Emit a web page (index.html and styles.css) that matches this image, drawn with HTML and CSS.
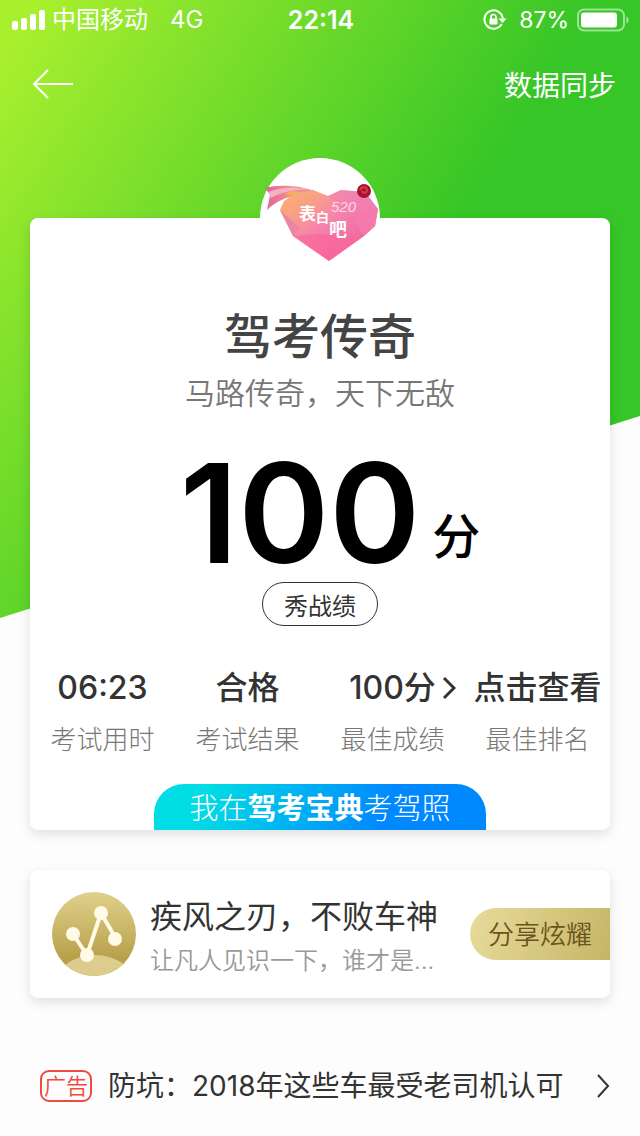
FILE: index.html
```html
<!DOCTYPE html>
<html lang="zh-CN">
<head>
<meta charset="utf-8">
<meta name="viewport" content="width=device-width, initial-scale=1">
<title>驾考宝典</title>
<link rel="stylesheet" href="styles.css">
</head>
<body>
<div class="page">
  <div class="status">
    <div class="status-side">
      <svg class="signal" width="34" height="22" viewBox="0 0 34 22" fill="#fff" aria-hidden="true">
        <rect x="0" y="12" width="6" height="9" rx="2"/><rect x="9" y="9" width="6" height="12" rx="2"/><rect x="18" y="5" width="6" height="16" rx="2"/><rect x="27" y="1" width="6" height="20" rx="2"/>
      </svg>
      <span class="carrier">中国移动</span>
      <span>4G</span>
    </div>
    <time class="clock">22:14</time>
    <div class="status-side status-right">
      <svg class="lock" width="24" height="22" viewBox="0 0 24 22" fill="none" aria-hidden="true">
        <path d="M18.700 15A9.200 9.200 0 1 1 19.800 9.500" stroke="#fff" stroke-width="2"/>
        <path d="M15.500 9.500h8l-4 4.500z" fill="#fff"/>
        <rect x="6.500" y="9.500" width="8" height="6" rx="1" fill="#fff"/>
        <path d="M8 10V8a2.500 2.500 0 0 1 5 0v2" stroke="#fff" stroke-width="1.500"/>
      </svg>
      <span class="charge">87%</span>
      <svg class="battery" width="53" height="24" viewBox="0 0 53 24" fill="none" aria-hidden="true">
        <rect x="1" y="1.500" width="46" height="21" rx="6" stroke="#fff" stroke-opacity=".5" stroke-width="2"/>
        <rect x="4" y="4.500" width="36" height="15" rx="3" fill="#fff"/>
        <path d="M49.500 8.500c2.600.8 2.600 6.200 0 7z" fill="#fff" fill-opacity=".6"/>
      </svg>
    </div>
  </div>

  <nav class="nav">
    <button class="back" type="button" aria-label="返回">
      <svg width="42" height="32" viewBox="0 0 42 32" fill="none" stroke="#fff" stroke-width="2" aria-hidden="true"><path d="M16 2 2 16l14 14M2 16h39"/></svg>
    </button>
    <a class="sync" href="#">数据同步</a>
  </nav>

  <main class="content">
    <section class="result card">
      <svg class="avatar" viewBox="0 0 120 120" role="img" aria-label="头像">
        <defs>
          <linearGradient id="heart" x1="0" y1="0" x2=".9" y2=".9">
            <stop offset="0" stop-color="#fbb36e"/><stop offset=".25" stop-color="#f9a183"/><stop offset=".5" stop-color="#f684ab"/><stop offset="1" stop-color="#ef5c9c"/>
          </linearGradient>
          <linearGradient id="ribbon" x1="0" x2="1">
            <stop offset="0" stop-color="#e0639c"/><stop offset=".5" stop-color="#ee8f8a"/><stop offset="1" stop-color="#e883a5"/>
          </linearGradient>
        </defs>
        <circle cx="60" cy="60" r="60" fill="#fff"/>
        <path d="M5 30C18 26 42 27 56 34L40 37C27 38 15 44 7 52L10 37Z" fill="url(#ribbon)"/>
        <path d="M8 34c14-5 28-6 43-2-14-1-28 1-40 8z" fill="#f4b1c4"/>
        <path d="M24 36l8-3 10 1-7 3z" fill="#f5b04f"/>
        <path d="M68 38 81 32 105 34 118 51 115 68 104 78 69 103 33 78 20 52 24 43 35 35 53 32Z" fill="url(#heart)"/>
        <path d="M68 38 81 32 105 34 118 51 91 57Z" fill="#ee80b8" opacity=".6"/>
        <path d="M118 51 115 68 104 78 91 57Z" fill="#f47aac"/>
        <path d="M20 52 40 70 33 78Z" fill="#ec85a0"/>
        <path d="M33 78 54 76 69 103Z" fill="#f8699a" opacity=".7"/>
        <path d="M54 76 104 78 69 103Z" fill="#fa6798" opacity=".7"/>
        <circle cx="104" cy="33" r="7" fill="#a8122e"/>
        <path d="M100 32c2-4 7-3 7 0s-4 4-5 1" fill="none" stroke="#dc3850" stroke-width="2"/>
        <g fill="#fff" class="avatar-text"><text x="39" y="62" font-size="17">表</text><text x="56" y="64" font-size="13">白</text><text x="69" y="78" font-size="18">吧</text></g>
        <text x="71" y="54" class="avatar-number">520</text>
      </svg>
      <h1 class="title">驾考传奇</h1>
      <p class="subtitle">马路传奇，天下无敌</p>
      <p class="score"><strong>100</strong><span>分</span></p>
      <button class="show" type="button">秀战绩</button>
      <dl class="stats">
        <div class="stat"><dt>考试用时</dt><dd>06:23</dd></div>
        <div class="stat"><dt>考试结果</dt><dd>合格</dd></div>
        <div class="stat"><dt>最佳成绩</dt><dd>100分<svg class="stat-arrow" width="14" height="24" viewBox="0 0 14 24" fill="none" stroke="#333" stroke-width="3" aria-hidden="true"><path d="M2 2l10 10L2 22"/></svg></dd></div>
        <div class="stat"><dt>最佳排名</dt><dd><a href="#">点击查看</a></dd></div>
      </dl>
      <p class="slogan">我在<b>驾考宝典</b>考驾照</p>
    </section>

    <section class="honor card">
      <svg class="medal" viewBox="0 0 84 84" aria-hidden="true">
        <defs>
          <linearGradient id="gold" x1="0" y1="0" x2="0" y2="1"><stop offset="0" stop-color="#dfd18b"/><stop offset=".8" stop-color="#b8a04a"/></linearGradient>
          <clipPath id="disc"><circle cx="42" cy="42" r="42"/></clipPath>
        </defs>
        <circle cx="42" cy="42" r="42" fill="url(#gold)"/>
        <ellipse cx="43" cy="88" rx="37" ry="25" fill="#dccd8d" clip-path="url(#disc)"/>
        <path d="M21 42 35 63 49 21 63 45" fill="none" stroke="#fffbe8" stroke-width="4"/>
        <g fill="#fffbe8"><circle cx="21" cy="42" r="7"/><circle cx="35" cy="63" r="7"/><circle cx="49" cy="21" r="7"/><circle cx="63" cy="47" r="7"/></g>
      </svg>
      <div class="honor-text">
        <h2>疾风之刃，不败车神</h2>
        <p>让凡人见识一下，谁才是...</p>
      </div>
      <button class="share" type="button">分享炫耀</button>
    </section>

    <a class="ad" href="#">
      <span class="ad-badge">广告</span>
      <span class="ad-text">防坑：2018年这些车最受老司机认可</span>
      <svg width="14" height="24" viewBox="0 0 14 24" fill="none" stroke="#333" stroke-width="2" aria-hidden="true"><path d="M2 1l10 11L2 23"/></svg>
    </a>
  </main>
</div>
</body>
</html>
```

FILE: styles.css
```css
* { box-sizing: border-box; }

body, h1, h2, p, dl, dd { margin: 0; }

body {
  background: #fdfdfd;
  color: #333;
  font-family: Inter, "Noto Sans CJK SC", sans-serif;
}

a { color: inherit; text-decoration: none; }

button {
  margin: 0;
  padding: 0;
  border: 0;
  background: none;
  color: inherit;
  font: inherit;
}

svg { display: block; flex: none; }

.page { position: relative; isolation: isolate; }

/* Slanted green backdrop */
.page::before {
  content: "";
  position: absolute;
  z-index: -1;
  inset: 0 0 auto;
  height: 618px;
  background: linear-gradient(122deg, #a8ef2e 4%, #37c627 58%);
  clip-path: polygon(0 0, 100% 0, 100% 416px, 0 100%);
}

.status {
  display: grid;
  grid-template-columns: 1fr auto 1fr;
  align-items: center;
  height: 40px;
  padding: 0 10px 0 12px;
  color: #fff;
  font-size: 24px;
  line-height: 40px;
}

.status-side { display: flex; align-items: center; }
.status-right { justify-content: flex-end; }
.signal { margin-right: 6px; }
.carrier { margin-right: 22px; }
.clock { font-size: 25px; font-weight: 600; }
.lock { margin-right: 12px; }
.charge { font-size: 23px; }
.battery { margin-left: 8px; }

.nav {
  display: flex;
  justify-content: space-between;
  align-items: center;
  height: 88px;
  padding: 0 24px 0 32px;
  color: #fff;
  font-size: 28px;
}

.content { padding: 90px 30px 0; }

.card {
  border-radius: 8px;
  background: #fff;
  box-shadow: 0 4px 12px rgba(0, 0, 0, .12);
}

.result {
  display: flex;
  flex-direction: column;
  align-items: center;
}

.avatar { width: 120px; height: 120px; margin-top: -60px; }

.avatar-text {
  font-family: "Noto Sans CJK SC", sans-serif;
  font-weight: 700;
}

.avatar-number {
  fill: #ffd5e6;
  font-family: "Liberation Sans", sans-serif;
  font-size: 15px;
  font-style: italic;
}

.title {
  margin-top: 27px;
  color: #444;
  font-size: 48px;
  font-weight: 500;
  line-height: 64px;
}

.subtitle {
  margin-top: 4px;
  color: #777;
  font-size: 30px;
  font-weight: 350;
  line-height: 40px;
}

.score {
  display: flex;
  align-items: flex-end;
  gap: 12px;
  margin: 40px 0 9px 20px;
  color: #000;
  font-weight: 500;
}

.score strong { font-size: 138px; font-weight: 600; line-height: 120px; }
.score span { margin-bottom: 4px; font-size: 48px; line-height: 64px; }

.show {
  width: 116px;
  height: 44px;
  border: 1px solid #333;
  border-radius: 22px;
  font-size: 24px;
}

.stats {
  display: grid;
  grid-template-columns: repeat(4, 1fr);
  align-self: stretch;
  margin-top: 40px;
}

.stat {
  display: flex;
  flex-direction: column-reverse;
  align-items: center;
  gap: 10px;
  white-space: nowrap;
}

.stat dt {
  color: #777;
  font-size: 26px;
  font-weight: 300;
  line-height: 40px;
}

.stat dd {
  position: relative;
  font-size: 32px;
  font-weight: 500;
  line-height: 44px;
}

.stat-arrow {
  position: absolute;
  top: 10px;
  left: calc(100% + 6px);
}

.slogan {
  margin-top: 24px;
  padding: 4px 35px 0;
  border-radius: 30px 30px 0 0;
  background: linear-gradient(110deg, #00dde4 15%, #0088ff 70%);
  color: #fff;
  font-size: 29px;
  font-weight: 300;
  line-height: 42px;
}

.slogan b { font-weight: 700; }

.honor {
  display: flex;
  align-items: center;
  height: 128px;
  margin-top: 40px;
  padding-left: 22px;
}

.medal { width: 84px; height: 84px; margin-right: 14px; }

.honor-text { flex: 1; min-width: 0; padding-top: 6px; white-space: nowrap; }

.honor-text h2 {
  font-size: 32px;
  font-weight: 400;
  line-height: 48px;
}

.honor-text p {
  color: #999;
  font-size: 24px;
  font-weight: 350;
  line-height: 40px;
}

.share {
  width: 140px;
  height: 52px;
  padding-bottom: 4px;
  border-radius: 26px 0 0 26px;
  background: linear-gradient(110deg, #e8dc9c, #c6b566);
  color: #6b531c;
  font-size: 26px;
  font-weight: 350;
}

.ad {
  display: flex;
  align-items: center;
  margin-top: 66px;
  padding-left: 10px;
  font-size: 28px;
  line-height: 44px;
}

.ad-badge {
  margin-right: 16px;
  padding: 0 2px;
  border: 2px solid #ef4b40;
  border-radius: 9px;
  color: #ef4b40;
  font-size: 22px;
  font-weight: 350;
  line-height: 28px;
}

.ad-text { flex: 1; }
```
